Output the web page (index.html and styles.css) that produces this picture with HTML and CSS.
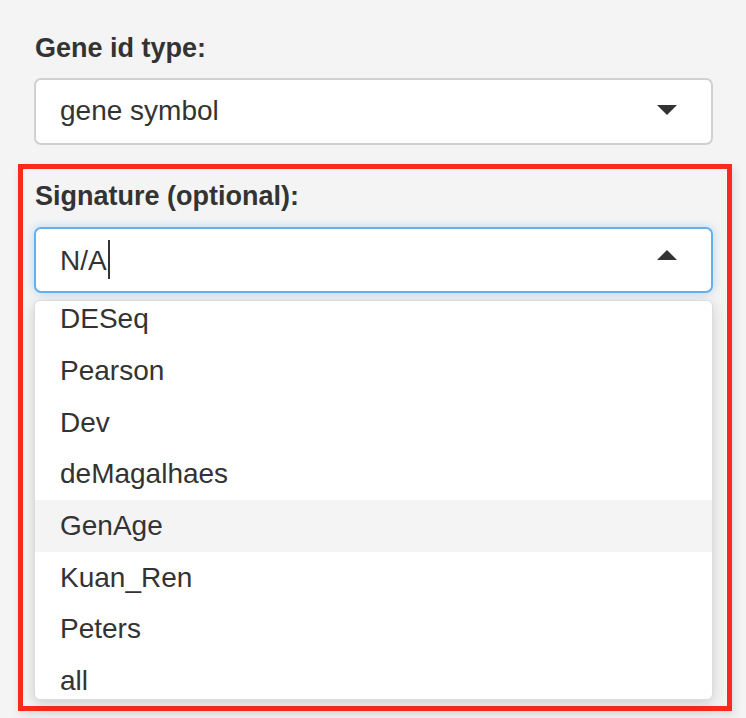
FILE: index.html
```html
<!DOCTYPE html>
<html lang="en">
<head>
<meta charset="utf-8">
<title>Signature select</title>
<link rel="stylesheet" href="styles.css">
</head>
<body>
<div class="page">
  <div class="group">
    <label class="label">Gene id type:</label>
    <div class="select">
      <span class="value">gene symbol</span>
      <span class="caret caret-down"></span>
    </div>
  </div>
  <div class="annot">
    <label class="label label-sig">Signature (optional):</label>
    <div class="select select-focus">
      <span class="value">N/A<span class="cursor"></span></span>
      <span class="caret caret-up"></span>
    </div>
    <div class="dropdown">
      <div class="options">
        <div class="option">DESeq</div>
        <div class="option">Pearson</div>
        <div class="option">Dev</div>
        <div class="option">deMagalhaes</div>
        <div class="option option-active">GenAge</div>
        <div class="option">Kuan_Ren</div>
        <div class="option">Peters</div>
        <div class="option">all</div>
      </div>
    </div>
  </div>
</div>
</body>
</html>
```
FILE: styles.css
```css
html, body {
  margin: 0;
  padding: 0;
  background: #f4f4f4;
}

body {
  font-family: "Liberation Sans", Arial, Helvetica, sans-serif;
  color: #333333;
}

.page {
  width: 746px;
  height: 718px;
  overflow: hidden;
  padding-top: 32.6px;
  box-sizing: border-box;
}

.group {
  padding: 0 33px 0 34px;
}

.label {
  display: block;
  font-weight: 700;
  font-size: 27px;
  line-height: 30px;
  color: #333333;
  margin-bottom: 15.4px;
  padding-left: 1px;
}

.label-sig {
  margin-bottom: 16.4px;
}

.select {
  height: 67px;
  box-sizing: border-box;
  border: 2px solid #d0d0d0;
  border-radius: 7px;
  background: #ffffff;
  display: flex;
  align-items: center;
  justify-content: space-between;
  padding: 0 34px 0 24px;
  font-size: 28px;
  line-height: 32px;
  color: #333333;
}

.select-focus {
  height: 66px;
  border-color: #66afe9;
  box-shadow: 0 0 10px rgba(102, 175, 233, 0.45);
}

.value {
  white-space: nowrap;
}

.cursor {
  display: inline-block;
  width: 2px;
  height: 39px;
  background: #333333;
  margin-left: 1px;
  vertical-align: -9px;
}

.caret {
  width: 0;
  height: 0;
  border-left: 10px solid transparent;
  border-right: 10px solid transparent;
}

.caret-down {
  border-top: 10px solid #333333;
  margin-bottom: 2px;
}

.caret-up {
  border-bottom: 10px solid #333333;
  margin-bottom: 10px;
}

.annot {
  margin: 19px 14px 0 18px;
  border: 5px solid #fb2a1f;
  padding: 11.6px 14px 6px 11px;
  box-shadow: 2px 4px 9px rgba(0, 0, 0, 0.1);
}

.dropdown {
  margin-top: 7px;
  height: 400px;
  box-sizing: border-box;
  border: 1px solid #dcdcdc;
  border-radius: 6px;
  background: #ffffff;
  overflow: hidden;
  box-shadow: 0 4px 14px rgba(0, 0, 0, 0.16);
}

.options {
  margin-top: -7.7px;
}

.option {
  height: 51.7px;
  line-height: 51.7px;
  padding-left: 25px;
  font-size: 28px;
  color: #333333;
  white-space: nowrap;
}

.option-active {
  background: #f4f4f4;
}
```
